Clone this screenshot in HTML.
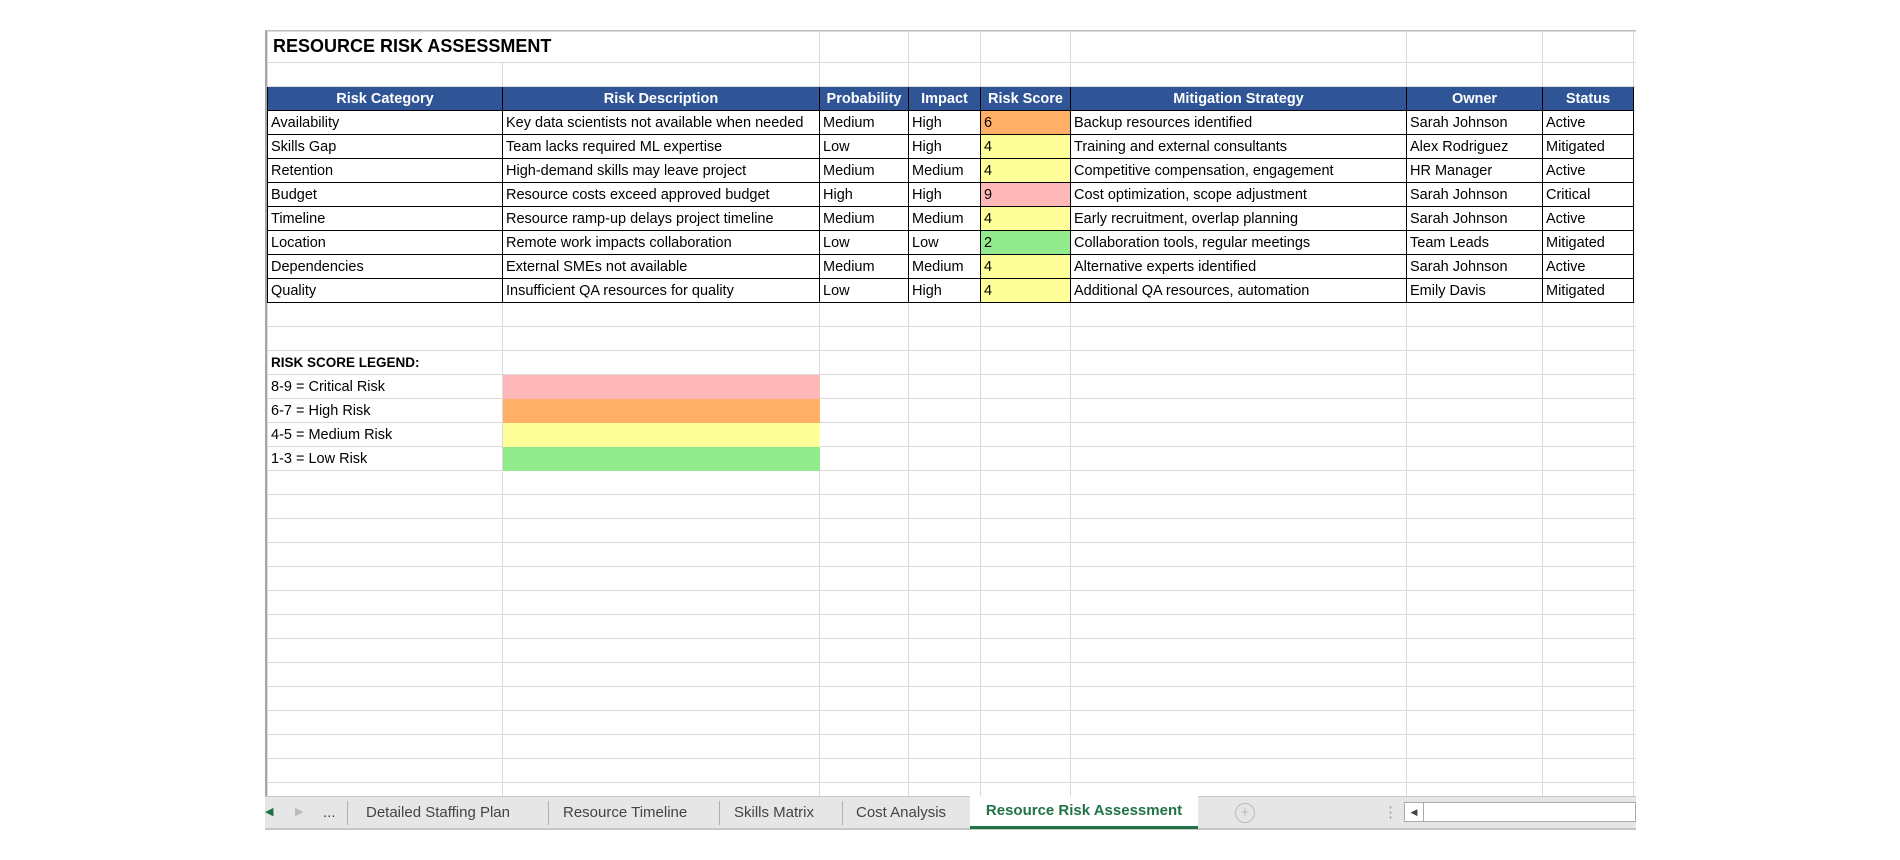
<!DOCTYPE html>
<html><head><meta charset="utf-8"><style>
html,body{margin:0;padding:0;background:#fff;width:1900px;height:860px;overflow:hidden;font-family:"Liberation Sans",Arial,sans-serif;}
#grid{position:absolute;left:265px;top:30px;width:1371px;height:766px;overflow:hidden;border-top:1px solid #bfbfbf;border-left:2px solid #a6a6a6;box-sizing:border-box;}
table{border-collapse:collapse;table-layout:fixed;width:1386px;font-size:14.5px;color:#000;}
td{border:1px solid #dadada;height:23px;padding:0 3px;white-space:nowrap;overflow:hidden;line-height:22px;}
tr.t td{height:30px;}
.title{position:absolute;left:6px;top:5px;font-weight:bold;font-size:18px;white-space:nowrap;}
.h td.d{background:#2F5597;color:#fff;font-weight:bold;text-align:center;border:1px solid #000;}
td.d{border:1px solid #000;}
.o{background:#FFB066}.p{background:#FFB8B8}.y{background:#FFFF99}.g{background:#92EC8E}
#tabs{position:absolute;left:265px;top:796px;width:1371px;height:34px;background:#e6e6e6;border-top:1px solid #c6c6c6;border-bottom:2px solid #c6c6c6;box-sizing:border-box;font-size:15px;color:#444;}
.tab{position:absolute;top:0;height:31px;line-height:31px;}
.sep{position:absolute;top:4px;width:1px;height:24px;background:#b0b0b0;}
.act{position:absolute;left:705px;top:-1px;width:228px;height:30px;background:#fff;border-bottom:3px solid #217346;color:#217346;font-weight:bold;text-align:center;line-height:30px;}
</style></head><body>
<div id="grid"><table>
<colgroup><col style="width:235px"><col style="width:317px"><col style="width:89px"><col style="width:72px"><col style="width:90px"><col style="width:336px"><col style="width:136px"><col style="width:91px"><col style="width:20px"></colgroup>
<tr class="t"><td style="border-right:none"></td><td style="border-left:none"></td><td></td><td></td><td></td><td></td><td></td><td></td><td></td></tr>
<tr><td></td><td></td><td></td><td></td><td></td><td></td><td></td><td></td><td></td></tr>
<tr class="h"><td class="d">Risk Category</td><td class="d">Risk Description</td><td class="d">Probability</td><td class="d">Impact</td><td class="d">Risk Score</td><td class="d">Mitigation Strategy</td><td class="d">Owner</td><td class="d">Status</td><td></td></tr>
<tr><td class="d">Availability</td><td class="d" style="text-overflow:clip">Key data scientists not available when needed</td><td class="d">Medium</td><td class="d">High</td><td class="d o">6</td><td class="d">Backup resources identified</td><td class="d">Sarah Johnson</td><td class="d">Active</td><td></td></tr>
<tr><td class="d">Skills Gap</td><td class="d">Team lacks required ML expertise</td><td class="d">Low</td><td class="d">High</td><td class="d y">4</td><td class="d">Training and external consultants</td><td class="d">Alex Rodriguez</td><td class="d">Mitigated</td><td></td></tr>
<tr><td class="d">Retention</td><td class="d">High-demand skills may leave project</td><td class="d">Medium</td><td class="d">Medium</td><td class="d y">4</td><td class="d">Competitive compensation, engagement</td><td class="d">HR Manager</td><td class="d">Active</td><td></td></tr>
<tr><td class="d">Budget</td><td class="d">Resource costs exceed approved budget</td><td class="d">High</td><td class="d">High</td><td class="d p">9</td><td class="d">Cost optimization, scope adjustment</td><td class="d">Sarah Johnson</td><td class="d">Critical</td><td></td></tr>
<tr><td class="d">Timeline</td><td class="d">Resource ramp-up delays project timeline</td><td class="d">Medium</td><td class="d">Medium</td><td class="d y">4</td><td class="d">Early recruitment, overlap planning</td><td class="d">Sarah Johnson</td><td class="d">Active</td><td></td></tr>
<tr><td class="d">Location</td><td class="d">Remote work impacts collaboration</td><td class="d">Low</td><td class="d">Low</td><td class="d g">2</td><td class="d">Collaboration tools, regular meetings</td><td class="d">Team Leads</td><td class="d">Mitigated</td><td></td></tr>
<tr><td class="d">Dependencies</td><td class="d">External SMEs not available</td><td class="d">Medium</td><td class="d">Medium</td><td class="d y">4</td><td class="d">Alternative experts identified</td><td class="d">Sarah Johnson</td><td class="d">Active</td><td></td></tr>
<tr><td class="d">Quality</td><td class="d">Insufficient QA resources for quality</td><td class="d">Low</td><td class="d">High</td><td class="d y">4</td><td class="d">Additional QA resources, automation</td><td class="d">Emily Davis</td><td class="d">Mitigated</td><td></td></tr>
<tr><td></td><td></td><td></td><td></td><td></td><td></td><td></td><td></td><td></td></tr>
<tr><td></td><td></td><td></td><td></td><td></td><td></td><td></td><td></td><td></td></tr>
<tr><td style="font-weight:bold;font-size:13.5px">RISK SCORE LEGEND:</td><td></td><td></td><td></td><td></td><td></td><td></td><td></td><td></td></tr>
<tr><td>8-9 = Critical Risk</td><td class="p" style="border-color:#FFB8B8"></td><td></td><td></td><td></td><td></td><td></td><td></td><td></td></tr>
<tr><td>6-7 = High Risk</td><td class="o" style="border-color:#FFB066"></td><td></td><td></td><td></td><td></td><td></td><td></td><td></td></tr>
<tr><td>4-5 = Medium Risk</td><td class="y" style="border-color:#FFFF99"></td><td></td><td></td><td></td><td></td><td></td><td></td><td></td></tr>
<tr><td>1-3 = Low Risk</td><td class="g" style="border-color:#92EC8E"></td><td></td><td></td><td></td><td></td><td></td><td></td><td></td></tr>
<tr><td></td><td></td><td></td><td></td><td></td><td></td><td></td><td></td><td></td></tr>
<tr><td></td><td></td><td></td><td></td><td></td><td></td><td></td><td></td><td></td></tr>
<tr><td></td><td></td><td></td><td></td><td></td><td></td><td></td><td></td><td></td></tr>
<tr><td></td><td></td><td></td><td></td><td></td><td></td><td></td><td></td><td></td></tr>
<tr><td></td><td></td><td></td><td></td><td></td><td></td><td></td><td></td><td></td></tr>
<tr><td></td><td></td><td></td><td></td><td></td><td></td><td></td><td></td><td></td></tr>
<tr><td></td><td></td><td></td><td></td><td></td><td></td><td></td><td></td><td></td></tr>
<tr><td></td><td></td><td></td><td></td><td></td><td></td><td></td><td></td><td></td></tr>
<tr><td></td><td></td><td></td><td></td><td></td><td></td><td></td><td></td><td></td></tr>
<tr><td></td><td></td><td></td><td></td><td></td><td></td><td></td><td></td><td></td></tr>
<tr><td></td><td></td><td></td><td></td><td></td><td></td><td></td><td></td><td></td></tr>
<tr><td></td><td></td><td></td><td></td><td></td><td></td><td></td><td></td><td></td></tr>
<tr><td></td><td></td><td></td><td></td><td></td><td></td><td></td><td></td><td></td></tr>
<tr><td></td><td></td><td></td><td></td><td></td><td></td><td></td><td></td><td></td></tr>
</table>
<div class="title">RESOURCE RISK ASSESSMENT</div>
</div>
<div id="tabs">
<div class="tab" style="left:0;color:#217346;font-size:11px">&#9664;</div>
<div class="tab" style="left:30px;color:#bbb;font-size:11px">&#9654;</div>
<div class="tab" style="left:58px;">...</div>
<div class="sep" style="left:82px"></div>
<div class="tab" style="left:101px">Detailed Staffing Plan</div>
<div class="sep" style="left:283px"></div>
<div class="tab" style="left:298px">Resource Timeline</div>
<div class="sep" style="left:454px"></div>
<div class="tab" style="left:469px">Skills Matrix</div>
<div class="sep" style="left:577px"></div>
<div class="tab" style="left:591px">Cost Analysis</div>
<div class="act">Resource Risk Assessment</div>
<div class="tab" style="left:970px;top:6px;width:18px;height:18px;border:1px solid #bbb;border-radius:50%;line-height:18px;text-align:center;color:#bbb;">+</div>
<div class="tab" style="left:1118px;color:#999;">&#8942;</div>
<div style="position:absolute;left:1139px;top:5px;width:232px;height:20px;background:#fff;border:1px solid #aaa;box-sizing:border-box;"><div style="position:absolute;left:0;top:0;width:18px;height:18px;border-right:1px solid #aaa;font-size:9px;line-height:18px;text-align:center;">&#9664;</div></div>
</div>
</body></html>
